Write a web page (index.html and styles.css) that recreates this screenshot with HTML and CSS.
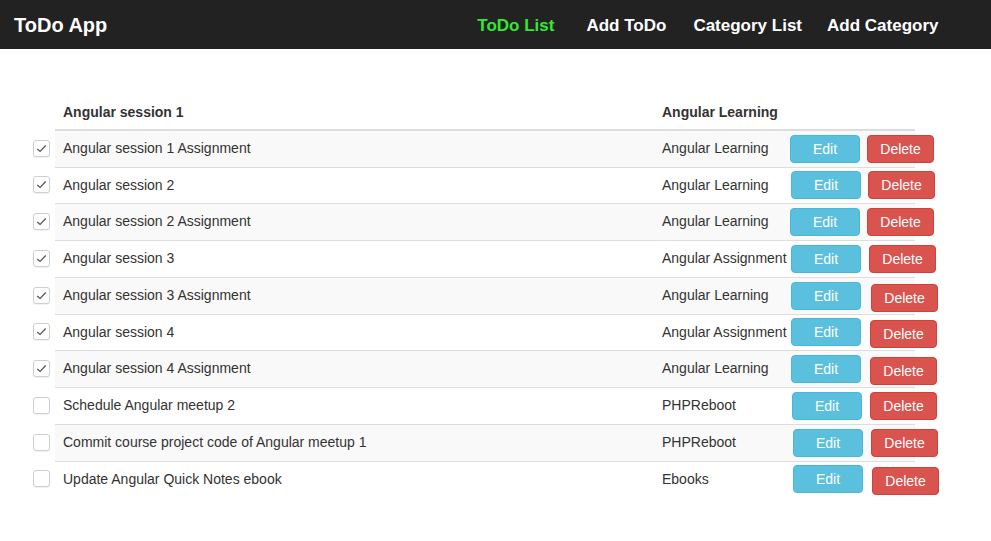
FILE: index.html
```html
<!DOCTYPE html>
<html>
<head>
<meta charset="utf-8">
<link rel="stylesheet" href="styles.css">
</head>
<body>
<nav class="navbar">
  <div class="brand">ToDo App</div>
  <ul class="nav">
    <li class="nav-item active">ToDo List</li>
    <li class="nav-item">Add ToDo</li>
    <li class="nav-item">Category List</li>
    <li class="nav-item">Add Category</li>
  </ul>
</nav>
<main class="content">
  <div class="list">
    <div class="row head">
      <span class="check-cell"></span>
      <div class="cells">
        <div class="cell title">Angular session 1</div>
        <div class="cell cat">Angular Learning</div>
        <div class="cell actions"></div>
      </div>
    </div>

    <div class="row item">
      <span class="check-cell"><span class="cb checked"><svg viewBox="0 0 16 16"><polyline points="3.5,8.5 6.5,11.2 12.5,4.8"/></svg></span></span>
      <div class="cells">
        <div class="cell title">Angular session 1 Assignment</div>
        <div class="cell cat">Angular Learning</div>
        <div class="cell actions"><button class="btn edit">Edit</button><button class="btn del">Delete</button></div>
      </div>
    </div>
    <div class="row item">
      <span class="check-cell"><span class="cb checked"><svg viewBox="0 0 16 16"><polyline points="3.5,8.5 6.5,11.2 12.5,4.8"/></svg></span></span>
      <div class="cells">
        <div class="cell title">Angular session 2</div>
        <div class="cell cat">Angular Learning</div>
        <div class="cell actions"><button class="btn edit">Edit</button><button class="btn del">Delete</button></div>
      </div>
    </div>
    <div class="row item">
      <span class="check-cell"><span class="cb checked"><svg viewBox="0 0 16 16"><polyline points="3.5,8.5 6.5,11.2 12.5,4.8"/></svg></span></span>
      <div class="cells">
        <div class="cell title">Angular session 2 Assignment</div>
        <div class="cell cat">Angular Learning</div>
        <div class="cell actions"><button class="btn edit">Edit</button><button class="btn del">Delete</button></div>
      </div>
    </div>
    <div class="row item">
      <span class="check-cell"><span class="cb checked"><svg viewBox="0 0 16 16"><polyline points="3.5,8.5 6.5,11.2 12.5,4.8"/></svg></span></span>
      <div class="cells">
        <div class="cell title">Angular session 3</div>
        <div class="cell cat">Angular Assignment</div>
        <div class="cell actions"><button class="btn edit">Edit</button><button class="btn del">Delete</button></div>
      </div>
    </div>
    <div class="row item">
      <span class="check-cell"><span class="cb checked"><svg viewBox="0 0 16 16"><polyline points="3.5,8.5 6.5,11.2 12.5,4.8"/></svg></span></span>
      <div class="cells">
        <div class="cell title">Angular session 3 Assignment</div>
        <div class="cell cat">Angular Learning</div>
        <div class="cell actions"><button class="btn edit">Edit</button><button class="btn del">Delete</button></div>
      </div>
    </div>
    <div class="row item">
      <span class="check-cell"><span class="cb checked"><svg viewBox="0 0 16 16"><polyline points="3.5,8.5 6.5,11.2 12.5,4.8"/></svg></span></span>
      <div class="cells">
        <div class="cell title">Angular session 4</div>
        <div class="cell cat">Angular Assignment</div>
        <div class="cell actions"><button class="btn edit">Edit</button><button class="btn del">Delete</button></div>
      </div>
    </div>
    <div class="row item">
      <span class="check-cell"><span class="cb checked"><svg viewBox="0 0 16 16"><polyline points="3.5,8.5 6.5,11.2 12.5,4.8"/></svg></span></span>
      <div class="cells">
        <div class="cell title">Angular session 4 Assignment</div>
        <div class="cell cat">Angular Learning</div>
        <div class="cell actions"><button class="btn edit">Edit</button><button class="btn del">Delete</button></div>
      </div>
    </div>
    <div class="row item">
      <span class="check-cell"><span class="cb"></span></span>
      <div class="cells">
        <div class="cell title">Schedule Angular meetup 2</div>
        <div class="cell cat">PHPReboot</div>
        <div class="cell actions"><button class="btn edit">Edit</button><button class="btn del">Delete</button></div>
      </div>
    </div>
    <div class="row item">
      <span class="check-cell"><span class="cb"></span></span>
      <div class="cells">
        <div class="cell title">Commit course project code of Angular meetup 1</div>
        <div class="cell cat">PHPReboot</div>
        <div class="cell actions"><button class="btn edit">Edit</button><button class="btn del">Delete</button></div>
      </div>
    </div>
    <div class="row item">
      <span class="check-cell"><span class="cb"></span></span>
      <div class="cells">
        <div class="cell title">Update Angular Quick Notes ebook</div>
        <div class="cell cat">Ebooks</div>
        <div class="cell actions"><button class="btn edit">Edit</button><button class="btn del">Delete</button></div>
      </div>
    </div>
  </div>
</main>
</body>
</html>
```

FILE: styles.css
```css
* { box-sizing: border-box; }
html, body { margin: 0; padding: 0; background: #fff; }
body {
  font-family: "Liberation Sans", Arial, sans-serif;
  font-size: 14px;
  line-height: 20px;
  color: #333;
}
.navbar {
  height: 49px;
  background: #222;
  display: flex;
  align-items: center;
  padding: 0 0 0 14px;
}
.brand {
  color: #fff;
  font-weight: bold;
  font-size: 20px;
  line-height: 24px;
}
.nav {
  list-style: none;
  margin: 2px 0 0 370px;
  padding: 0;
  display: flex;
}
.nav-item {
  color: #fff;
  font-weight: bold;
  font-size: 17px;
  line-height: 22px;
  margin-right: 27px;
}
.nav-item.active { color: #33e833; margin-right: 32px; }
.nav-item:nth-child(3) { margin-right: 25px; }
.content {
  padding: 44px 0 0 33px;
}
.list { width: 882px; }
.row {
  display: flex;
}
.check-cell {
  width: 22px;
  flex: none;
  display: flex;
  align-items: center;
}
.cells {
  width: 860px;
  display: grid;
  grid-template-columns: 599px 136px 125px;
  border-top: 1px solid #ddd;
}
.row.head .cells {
  border-top: 0;
  border-bottom: 2px solid #ddd;
  font-weight: bold;
}
.row.head .cell { padding-top: 10px; padding-bottom: 6px; }
.row.head + .row .cells { border-top: 0; }
.row.item:nth-child(even) .cells { background: #f9f9f9; }
.cell {
  padding: 8px;
  line-height: 19.75px;
  white-space: nowrap;
}
.cell.actions {
  padding: 0;
  display: flex;
  align-items: center;
  overflow: visible;
}
.cb {
  display: block;
  width: 17px;
  height: 17px;
  border: 1px solid #cfcfcf;
  border-radius: 3px;
  background: #fff;
  box-shadow: 0 1px 1px rgba(0,0,0,0.06);
}
.cb svg {
  display: block;
  width: 15px;
  height: 15px;
  fill: none;
  stroke: #555;
  stroke-width: 1.3;
}
.btn {
  flex: none;
  font-family: "Liberation Sans", Arial, sans-serif;
  font-size: 14px;
  color: #fff;
  height: 28px;
  padding: 0;
  border-radius: 4px;
  border: 1px solid;
  line-height: 26px;
  text-align: center;
}
.btn.edit {
  width: 70px;
  background: #5bc0de;
  border-color: #46b8da;
}
.btn.del {
  width: 67px;
  margin-left: 7px;
  background: #d9534f;
  border-color: #d43f3a;
}
.row.item:nth-child(3) .btn.edit,
.row.item:nth-child(5) .btn.edit,
.row.item:nth-child(6) .btn.edit,
.row.item:nth-child(7) .btn.edit,
.row.item:nth-child(8) .btn.edit { margin-left: 1px; }
.row.item:nth-child(9) .btn.edit { margin-left: 2px; }
.row.item:nth-child(10) .btn.edit,
.row.item:nth-child(11) .btn.edit { margin-left: 3px; }
.row.item:nth-child(5) .btn.del { margin-left: 8px; }
.row.item:nth-child(6) .btn.del { margin-left: 10px; transform: translateY(2px); }
.row.item:nth-child(7) .btn.del,
.row.item:nth-child(8) .btn.del { margin-left: 9px; transform: translateY(2px); }
.row.item:nth-child(9) .btn.del { margin-left: 8px; }
.row.item:nth-child(10) .btn.del { margin-left: 8px; }
.row.item:nth-child(11) .btn.del { margin-left: 9px; transform: translateY(2px); }
```
